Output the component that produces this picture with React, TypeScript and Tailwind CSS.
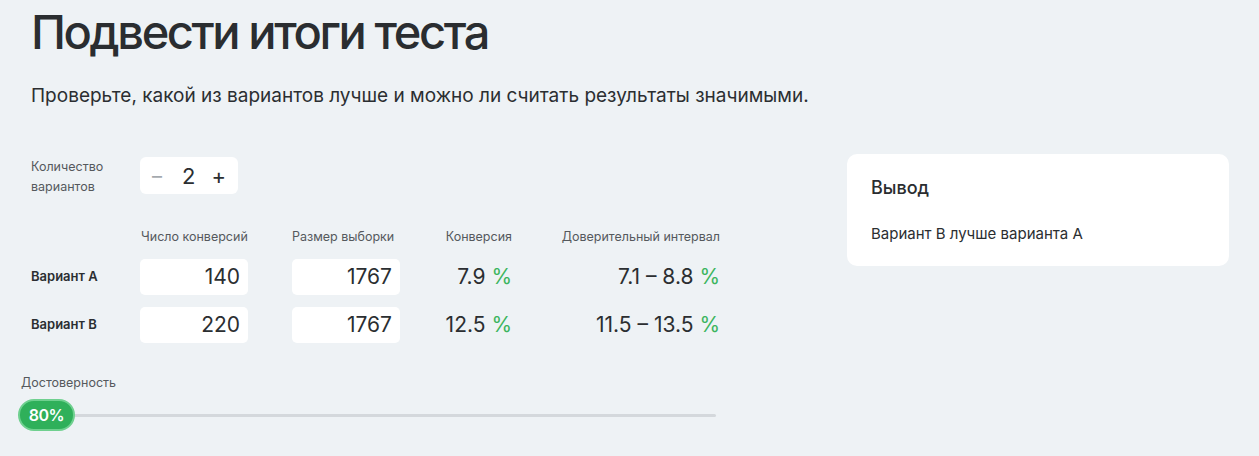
import React, { useState } from 'react';

const rows = [
  { name: 'Вариант А', conv: '140', size: '1767', rate: '7.9', ci: '7.1 – 8.8' },
  { name: 'Вариант В', conv: '220', size: '1767', rate: '12.5', ci: '11.5 – 13.5' },
];

export default function App() {
  const [count, setCount] = useState(2);
  const confidence = 80;

  return (
    <div className="min-h-[456px] w-full bg-[#eef2f5] text-[#2b2e31] font-['Inter',sans-serif] overflow-hidden">
      <div className="pl-[31px] pt-[4px]">
        <h1 className="text-[47px] leading-[56px] font-medium tracking-[-2.4px] text-[#2a2d30]">Подвести итоги теста</h1>
        <p className="mt-[22px] text-[19px] leading-[28px] text-[#2b2e31]">
          Проверьте, какой из вариантов лучше и можно ли считать результаты значимыми.
        </p>
      </div>

      <div className="flex mt-[44px]">
        <div className="w-[847px] shrink-0">
          {/* variants count */}
          <div className="flex items-start pl-[31px] pt-[3px]">
            <div className="w-[109px] text-[12.5px] leading-[20px] text-[#55595d]">
              Количество<br />вариантов
            </div>
            <div className="flex items-center h-[37px] w-[98px] bg-white rounded-[6px] px-[12px] justify-between">
              <button onClick={() => setCount(c => Math.max(2, c - 1))} className="text-[#a4a9ae] text-[20px] leading-none">–</button>
              <span className="text-[22px] leading-none text-[#2b2e31] ml-[4px]">{count}</span>
              <button onClick={() => setCount(c => c + 1)} className="text-[#2b2e31] text-[22px] leading-none">+</button>
            </div>
          </div>

          {/* table */}
          <div className="grid grid-cols-[140px_108px_44px_108px_112px_208px] items-center mt-[30px] text-[#2b2e31]">
            <div />
            <div className="pl-[1px] text-[12.5px] leading-[20px] text-[#55595d] whitespace-nowrap">Число конверсий</div>
            <div />
            <div className="text-[12.5px] leading-[20px] text-[#55595d] whitespace-nowrap">Размер выборки</div>
            <div className="text-right text-[12.5px] leading-[20px] text-[#55595d] whitespace-nowrap">Конверсия</div>
            <div className="text-right text-[12.5px] leading-[20px] text-[#55595d] whitespace-nowrap">Доверительный интервал</div>

            {rows.map(r => (
              <React.Fragment key={r.name}>
                <div className="mt-[12px] pl-[31px] text-[13px] font-semibold text-[#2b2e31]">{r.name}</div>
                <div className="mt-[12px] h-[36px] bg-white rounded-[5px] flex items-center justify-end pr-[8px] text-[21px]">{r.conv}</div>
                <div />
                <div className="mt-[12px] h-[36px] bg-white rounded-[5px] flex items-center justify-end pr-[8px] text-[21px]">{r.size}</div>
                <div className="mt-[12px] text-right text-[21px]">
                  {r.rate} <span className="text-[#3cb55e]">%</span>
                </div>
                <div className="mt-[12px] text-right text-[21px] whitespace-nowrap">
                  {r.ci} <span className="text-[#3cb55e]">%</span>
                </div>
              </React.Fragment>
            ))}
          </div>

          {/* slider */}
          <div className="pl-[21px] mt-[30px] w-[718px]">
            <div className="text-[12.5px] leading-[20px] text-[#55595d]">Достоверность</div>
            <div className="relative mt-[6px] h-[32px] flex items-center">
              <div className="w-full h-[3px] bg-[#d4d8dc] rounded-full ml-[-2px]" />
              <div className="absolute left-[-3px] top-0 h-[32px] w-[57px] rounded-full bg-[#2fb05a] border-2 border-[#6fd08f] flex items-center justify-center text-white text-[16px] font-semibold tracking-[-0.5px]">
                {confidence}%
              </div>
            </div>
          </div>
        </div>

        {/* result card */}
        <div className="w-[382px] h-[112px] bg-white rounded-[10px] px-[24px] pt-[22px]">
          <div className="text-[18px] leading-[24px] font-medium text-[#2a2d30]">Вывод</div>
          <div className="mt-[23px] text-[15px] leading-[22px] text-[#2b2e31]">Вариант В лучше варианта А</div>
        </div>
      </div>
    </div>
  );
}
